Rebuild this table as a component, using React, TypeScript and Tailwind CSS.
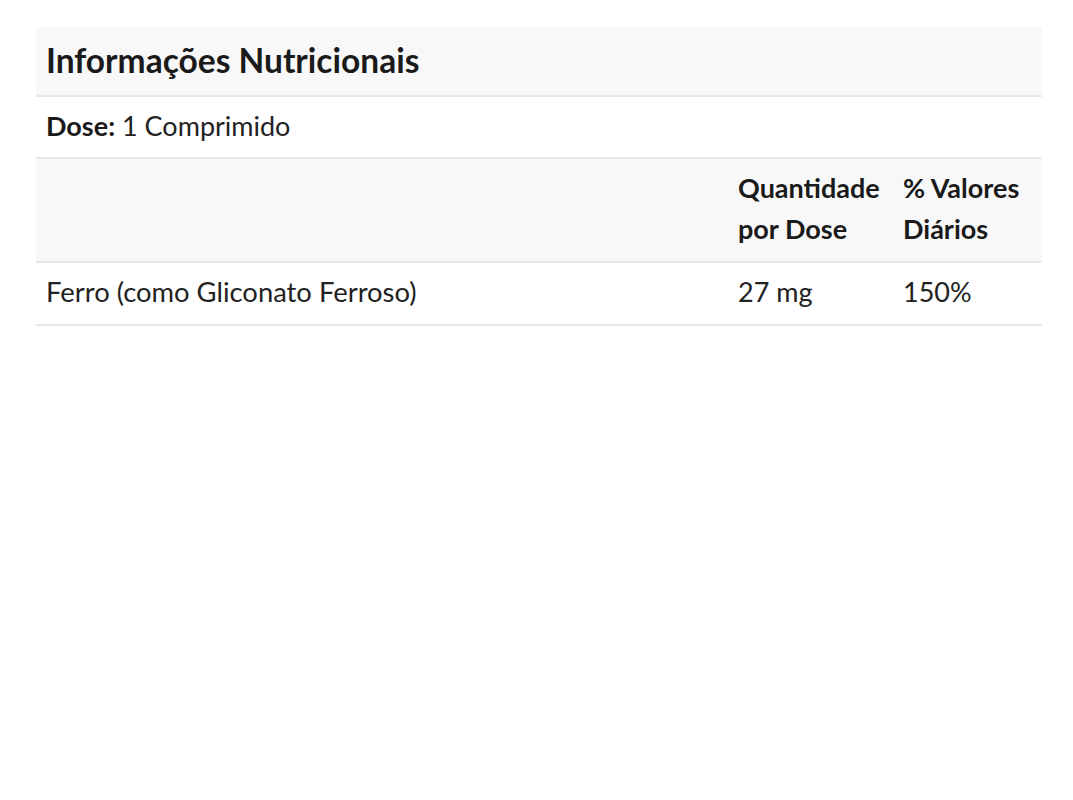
import React from "react";

export default function App() {
  return (
    <div className="min-h-screen bg-white pt-[27px] px-[36px]" style={{ fontFamily: "Lato, 'Noto Sans', sans-serif" }}>
      <div className="w-[1006px] text-[#222]">
        <div className="bg-[#f8f8f8] px-[10px] pt-[9px] pb-[11px] border-b-2 border-[#e8e8e8]">
          <h2 className="text-[33.5px] font-bold text-[#1a1a1a] leading-[48px]">Informações Nutricionais</h2>
        </div>
        <div className="px-[10px] pt-[8px] pb-[11px] border-b-2 border-[#e8e8e8] text-[27px] leading-[41px]">
          <span className="font-bold text-[#1a1a1a]">Dose:</span> 1 Comprimido
        </div>
        <table className="w-full border-collapse text-[27px] leading-[41px]">
          <thead>
            <tr className="bg-[#f8f8f8] border-b-2 border-[#e8e8e8]">
              <th className="w-[692px] px-[10px] pt-[8px] pb-[12px] text-left font-bold"></th>
              <th className="w-[165px] px-[10px] pt-[8px] pb-[12px] text-left font-bold text-[#1a1a1a] align-top">Quantidade por Dose</th>
              <th className="px-[10px] pt-[8px] pb-[12px] text-left font-bold text-[#1a1a1a] align-top">% Valores Diários</th>
            </tr>
          </thead>
          <tbody>
            <tr className="border-b-2 border-[#e8e8e8]">
              <td className="px-[10px] pt-[8px] pb-[12px] text-[27.4px]">Ferro (como Gliconato Ferroso)</td>
              <td className="px-[10px] pt-[8px] pb-[12px]">27 mg</td>
              <td className="px-[10px] pt-[8px] pb-[12px]">150%</td>
            </tr>
          </tbody>
        </table>
      </div>
    </div>
  );
}
